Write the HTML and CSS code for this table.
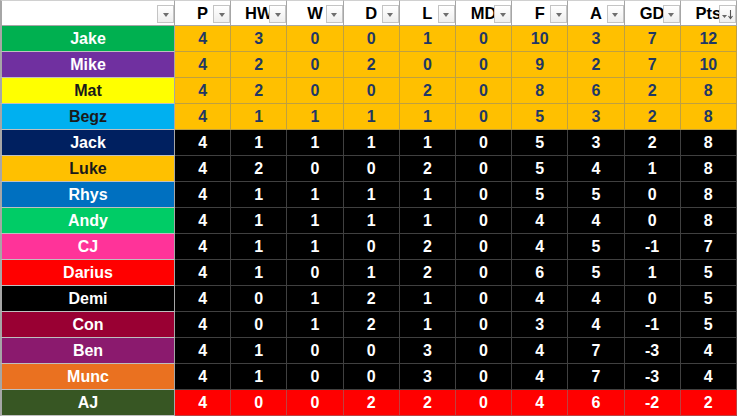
FILE: index.html
```html
<!DOCTYPE html>
<html>
<head>
<meta charset="utf-8">
<link rel="stylesheet" href="styles.css">
</head>
<body>
<div class="sheet">
  <div class="hcell first"><span class="btn"><i class="tri"></i></span></div>
  <div class="hcell">P<span class="btn"><i class="tri"></i></span></div>
  <div class="hcell">HW<span class="btn"><i class="tri"></i></span></div>
  <div class="hcell">W<span class="btn"><i class="tri"></i></span></div>
  <div class="hcell">D<span class="btn"><i class="tri"></i></span></div>
  <div class="hcell">L<span class="btn"><i class="tri"></i></span></div>
  <div class="hcell">MD<span class="btn"><i class="tri"></i></span></div>
  <div class="hcell">F<span class="btn"><i class="tri"></i></span></div>
  <div class="hcell">A<span class="btn"><i class="tri"></i></span></div>
  <div class="hcell">GD<span class="btn"><i class="tri"></i></span></div>
  <div class="hcell">Pts<span class="btn sort"><svg width="15" height="15" viewBox="0 0 15 15"><path d="M2 8h5l-2.5 3z" fill="#666"/><path d="M10.5 3v8M8.5 9l2 2.5 2-2.5" stroke="#555" stroke-width="1.1" fill="none"/></svg></span></div>

  <div class="name c-jake">Jake</div><div class="n gold">4</div><div class="n gold">3</div><div class="n gold">0</div><div class="n gold">0</div><div class="n gold">1</div><div class="n gold">0</div><div class="n gold">10</div><div class="n gold">3</div><div class="n gold">7</div><div class="n gold">12</div>
  <div class="name c-mike">Mike</div><div class="n gold">4</div><div class="n gold">2</div><div class="n gold">0</div><div class="n gold">2</div><div class="n gold">0</div><div class="n gold">0</div><div class="n gold">9</div><div class="n gold">2</div><div class="n gold">7</div><div class="n gold">10</div>
  <div class="name c-mat">Mat</div><div class="n gold">4</div><div class="n gold">2</div><div class="n gold">0</div><div class="n gold">0</div><div class="n gold">2</div><div class="n gold">0</div><div class="n gold">8</div><div class="n gold">6</div><div class="n gold">2</div><div class="n gold">8</div>
  <div class="name c-begz">Begz</div><div class="n gold">4</div><div class="n gold">1</div><div class="n gold">1</div><div class="n gold">1</div><div class="n gold">1</div><div class="n gold">0</div><div class="n gold">5</div><div class="n gold">3</div><div class="n gold">2</div><div class="n gold">8</div>
  <div class="name c-jack">Jack</div><div class="n dark">4</div><div class="n dark">1</div><div class="n dark">1</div><div class="n dark">1</div><div class="n dark">1</div><div class="n dark">0</div><div class="n dark">5</div><div class="n dark">3</div><div class="n dark">2</div><div class="n dark">8</div>
  <div class="name c-luke">Luke</div><div class="n dark">4</div><div class="n dark">2</div><div class="n dark">0</div><div class="n dark">0</div><div class="n dark">2</div><div class="n dark">0</div><div class="n dark">5</div><div class="n dark">4</div><div class="n dark">1</div><div class="n dark">8</div>
  <div class="name c-rhys">Rhys</div><div class="n dark">4</div><div class="n dark">1</div><div class="n dark">1</div><div class="n dark">1</div><div class="n dark">1</div><div class="n dark">0</div><div class="n dark">5</div><div class="n dark">5</div><div class="n dark">0</div><div class="n dark">8</div>
  <div class="name c-andy">Andy</div><div class="n dark">4</div><div class="n dark">1</div><div class="n dark">1</div><div class="n dark">1</div><div class="n dark">1</div><div class="n dark">0</div><div class="n dark">4</div><div class="n dark">4</div><div class="n dark">0</div><div class="n dark">8</div>
  <div class="name c-cj">CJ</div><div class="n dark">4</div><div class="n dark">1</div><div class="n dark">1</div><div class="n dark">0</div><div class="n dark">2</div><div class="n dark">0</div><div class="n dark">4</div><div class="n dark">5</div><div class="n dark">-1</div><div class="n dark">7</div>
  <div class="name c-darius">Darius</div><div class="n dark">4</div><div class="n dark">1</div><div class="n dark">0</div><div class="n dark">1</div><div class="n dark">2</div><div class="n dark">0</div><div class="n dark">6</div><div class="n dark">5</div><div class="n dark">1</div><div class="n dark">5</div>
  <div class="name c-demi">Demi</div><div class="n dark">4</div><div class="n dark">0</div><div class="n dark">1</div><div class="n dark">2</div><div class="n dark">1</div><div class="n dark">0</div><div class="n dark">4</div><div class="n dark">4</div><div class="n dark">0</div><div class="n dark">5</div>
  <div class="name c-con">Con</div><div class="n dark">4</div><div class="n dark">0</div><div class="n dark">1</div><div class="n dark">2</div><div class="n dark">1</div><div class="n dark">0</div><div class="n dark">3</div><div class="n dark">4</div><div class="n dark">-1</div><div class="n dark">5</div>
  <div class="name c-ben">Ben</div><div class="n dark">4</div><div class="n dark">1</div><div class="n dark">0</div><div class="n dark">0</div><div class="n dark">3</div><div class="n dark">0</div><div class="n dark">4</div><div class="n dark">7</div><div class="n dark">-3</div><div class="n dark">4</div>
  <div class="name c-munc">Munc</div><div class="n dark">4</div><div class="n dark">1</div><div class="n dark">0</div><div class="n dark">0</div><div class="n dark">3</div><div class="n dark">0</div><div class="n dark">4</div><div class="n dark">7</div><div class="n dark">-3</div><div class="n dark">4</div>
  <div class="name c-aj">AJ</div><div class="n red">4</div><div class="n red">0</div><div class="n red">0</div><div class="n red">2</div><div class="n red">2</div><div class="n red">0</div><div class="n red">4</div><div class="n red">6</div><div class="n red">-2</div><div class="n red">2</div>
</div>
</body>
</html>
```

FILE: styles.css
```css
html, body {
  margin: 0;
  padding: 0;
  background: #ffffff;
}
.sheet {
  display: grid;
  grid-template-columns: 175px repeat(10, 56.2px);
  grid-auto-rows: 26px;
  width: 737px;
  font-family: "Liberation Sans", Arial, sans-serif;
  font-weight: bold;
  font-size: 16px;
}
.sheet > div {
  box-sizing: border-box;
  display: flex;
  align-items: center;
  justify-content: center;
  border-right: 1px solid rgba(128, 128, 128, 0.5);
  border-bottom: 1px solid rgba(128, 128, 128, 0.5);
  overflow: hidden;
  white-space: nowrap;
}
.hcell {
  position: relative;
  background: #ffffff;
  color: #000000;
  font-size: 16.5px;
  border-right-color: #a6a6a6 !important;
  border-bottom-color: #a6a6a6 !important;
  border-top: 1px solid #d0d0d0;
  padding-top: 1px;
}
.hcell.first,
.name {
  border-left: 2px solid #a6a6a6;
}
.btn {
  position: absolute;
  right: 0;
  bottom: 2px;
  width: 17px;
  height: 18px;
  box-sizing: border-box;
  border: 1px solid #c4c4c4;
  background: linear-gradient(#ffffff, #eeeeee);
  display: flex;
  align-items: center;
  justify-content: center;
}
.tri {
  display: block;
  width: 0;
  height: 0;
  margin-top: 2px;
  border-left: 3.5px solid transparent;
  border-right: 3.5px solid transparent;
  border-top: 4px solid #6e6e6e;
}
.sort svg {
  display: block;
}
.name {
  color: #ffffff;
  border-bottom-color: #bfbfbf !important;
  border-right-color: #a6a6a6 !important;
}
.n.gold { background: #ffc000; color: #1f3864; }
.n.dark { background: #000000; color: #ffffff; }
.n.red  { background: #ff0000; color: #ffffff; }

.c-jake   { background: #00b050; }
.c-mike   { background: #7030a0; }
.c-mat    { background: #ffff00; color: #1a1a1a !important; }
.c-begz   { background: #00b0f0; color: #1a1a1a !important; }
.c-jack   { background: #002060; }
.c-luke   { background: #ffc000; color: #1a1a1a !important; }
.c-rhys   { background: #0070c0; }
.c-andy   { background: #00cc66; }
.c-cj     { background: #ff3399; }
.c-darius { background: #ff0000; }
.c-demi   { background: #000000; }
.c-con    { background: #990033; }
.c-ben    { background: #8b1a6e; }
.c-munc   { background: #ea7120; }
.c-aj     { background: #375623; }
```
